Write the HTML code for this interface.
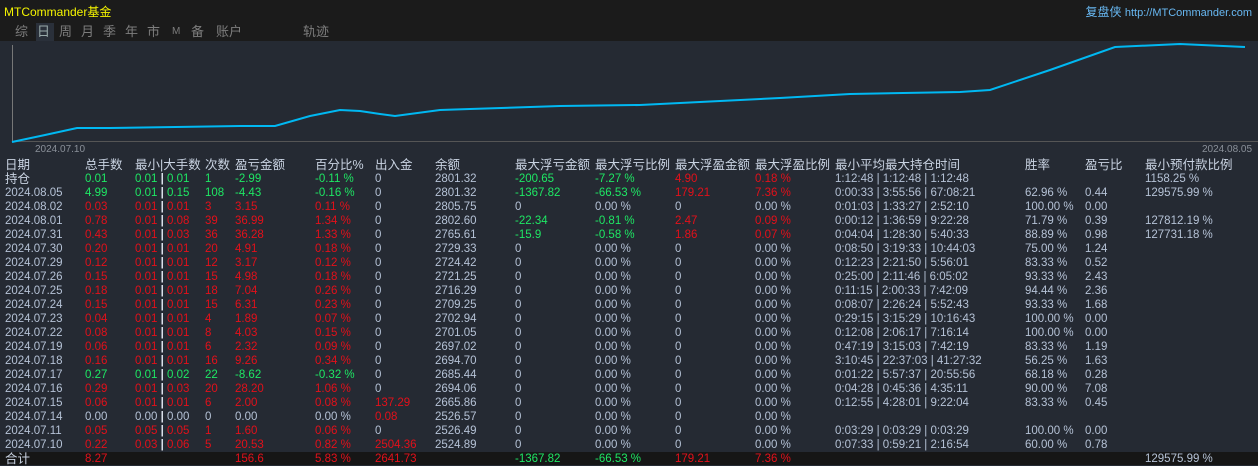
<!DOCTYPE html>
<html><head><meta charset="utf-8"><style>
body{margin:0;width:1258px;height:465px;background:#252a33;overflow:hidden;font-family:"Liberation Sans","Noto Sans CJK SC",sans-serif;position:relative}
.top{position:absolute;left:0;top:0;width:1258px;height:41px;background:#1b1b1b}
.t{position:absolute;white-space:nowrap}
.tab{position:absolute;top:23px;font-size:13px;color:#7d7d7d;height:18px;line-height:18px}
.r{position:absolute;left:0;width:1258px;height:14px;font-size:11.5px;line-height:14px;color:#b5c2d6}
.r span{position:absolute;white-space:nowrap}
.h{font-size:12.5px;color:#c9d3e2}
.g{color:#1ee864}.d{color:#e3101a}
.c1{left:5px}.c2{left:85px}.c3{left:135px}.c4{left:205px}.c5{left:235px}.c6{left:315px}.c7{left:375px}.c8{left:435px}.c9{left:515px}.c10{left:595px}.c11{left:675px}.c12{left:755px}.c13{left:835px}.c14{left:1025px}.c15{left:1085px}.c16{left:1145px}
.p{color:#e0e6f0}
</style></head><body>
<div class="top"></div>
<div class="t" style="left:4px;top:3px;font-size:12px;color:#f5f500">MTCommander基金</div>
<div class="t" style="right:6px;top:3px;font-size:12px;color:#68b8f2">复盘侠 <span style="font-size:11px">http://MTCommander.com</span></div>
<div style="position:absolute;left:36px;top:23px;width:18px;height:18px;background:#2a303a"></div>
<div class="tab" style="left:15px">综</div><div class="tab" style="left:37px;color:#9aa">日</div><div class="tab" style="left:59px">周</div><div class="tab" style="left:81px">月</div><div class="tab" style="left:103px">季</div><div class="tab" style="left:125px">年</div><div class="tab" style="left:147px">市</div><div class="tab" style="left:172px;font-size:10px">M</div><div class="tab" style="left:191px">备</div><div class="tab" style="left:216px">账户</div><div class="tab" style="left:303px">轨迹</div>
<svg style="position:absolute;left:0;top:0" width="1258" height="160">
<line x1="12.5" y1="45" x2="12.5" y2="142" stroke="#777" stroke-width="1"/>
<line x1="12" y1="141.5" x2="1258" y2="141.5" stroke="#555" stroke-width="1"/>
<polyline fill="none" stroke="#00b8f2" stroke-width="2" points="12,142 45,135 77,128 110,128 240,126 275,126 310,116 340,110 360,111 380,114 395,116 440,110 470,109 560,106 640,105 700,102 780,98 850,94 960,92 990,90 1050,70 1115,47 1180,44 1245,47"/>
<text x="35" y="152" font-size="10" fill="#8a9099" font-family="Liberation Sans">2024.07.10</text>
<text x="1202" y="152" font-size="10" fill="#8a9099" font-family="Liberation Sans">2024.08.05</text>
</svg>
<div class="r h" style="top:158px"><span class="c1">日期</span><span class="c2">总手数</span><span class="c3">最小|大手数</span><span class="c4">次数</span><span class="c5">盈亏金额</span><span class="c6">百分比%</span><span class="c7">出入金</span><span class="c8">余额</span><span class="c9">最大浮亏金额</span><span class="c10">最大浮亏比例</span><span class="c11">最大浮盈金额</span><span class="c12">最大浮盈比例</span><span class="c13">最小平均最大持仓时间</span><span class="c14">胜率</span><span class="c15">盈亏比</span><span class="c16">最小预付款比例</span></div>
<div class="r" style="top:172px"><span class="c1 h">持仓</span><span class="c2 g">0.01</span><span class="c3 g">0.01 <b class="p">|</b> 0.01</span><span class="c4 g">1</span><span class="c5 g">-2.99</span><span class="c6 g">-0.11 %</span><span class="c7">0</span><span class="c8">2801.32</span><span class="c9 g">-200.65</span><span class="c10 g">-7.27 %</span><span class="c11 d">4.90</span><span class="c12 d">0.18 %</span><span class="c13">1:12:48 | 1:12:48 | 1:12:48</span><span class="c16">1158.25 %</span></div>
<div class="r" style="top:186px"><span class="c1">2024.08.05</span><span class="c2 g">4.99</span><span class="c3 g">0.01 <b class="p">|</b> 0.15</span><span class="c4 g">108</span><span class="c5 g">-4.43</span><span class="c6 g">-0.16 %</span><span class="c7">0</span><span class="c8">2801.32</span><span class="c9 g">-1367.82</span><span class="c10 g">-66.53 %</span><span class="c11 d">179.21</span><span class="c12 d">7.36 %</span><span class="c13">0:00:33 | 3:55:56 | 67:08:21</span><span class="c14">62.96 %</span><span class="c15">0.44</span><span class="c16">129575.99 %</span></div>
<div class="r" style="top:200px"><span class="c1">2024.08.02</span><span class="c2 d">0.03</span><span class="c3 d">0.01 <b class="p">|</b> 0.01</span><span class="c4 d">3</span><span class="c5 d">3.15</span><span class="c6 d">0.11 %</span><span class="c7">0</span><span class="c8">2805.75</span><span class="c9">0</span><span class="c10">0.00 %</span><span class="c11">0</span><span class="c12">0.00 %</span><span class="c13">0:01:03 | 1:33:27 | 2:52:10</span><span class="c14">100.00 %</span><span class="c15">0.00</span></div>
<div class="r" style="top:214px"><span class="c1">2024.08.01</span><span class="c2 d">0.78</span><span class="c3 d">0.01 <b class="p">|</b> 0.08</span><span class="c4 d">39</span><span class="c5 d">36.99</span><span class="c6 d">1.34 %</span><span class="c7">0</span><span class="c8">2802.60</span><span class="c9 g">-22.34</span><span class="c10 g">-0.81 %</span><span class="c11 d">2.47</span><span class="c12 d">0.09 %</span><span class="c13">0:00:12 | 1:36:59 | 9:22:28</span><span class="c14">71.79 %</span><span class="c15">0.39</span><span class="c16">127812.19 %</span></div>
<div class="r" style="top:228px"><span class="c1">2024.07.31</span><span class="c2 d">0.43</span><span class="c3 d">0.01 <b class="p">|</b> 0.03</span><span class="c4 d">36</span><span class="c5 d">36.28</span><span class="c6 d">1.33 %</span><span class="c7">0</span><span class="c8">2765.61</span><span class="c9 g">-15.9</span><span class="c10 g">-0.58 %</span><span class="c11 d">1.86</span><span class="c12 d">0.07 %</span><span class="c13">0:04:04 | 1:28:30 | 5:40:33</span><span class="c14">88.89 %</span><span class="c15">0.98</span><span class="c16">127731.18 %</span></div>
<div class="r" style="top:242px"><span class="c1">2024.07.30</span><span class="c2 d">0.20</span><span class="c3 d">0.01 <b class="p">|</b> 0.01</span><span class="c4 d">20</span><span class="c5 d">4.91</span><span class="c6 d">0.18 %</span><span class="c7">0</span><span class="c8">2729.33</span><span class="c9">0</span><span class="c10">0.00 %</span><span class="c11">0</span><span class="c12">0.00 %</span><span class="c13">0:08:50 | 3:19:33 | 10:44:03</span><span class="c14">75.00 %</span><span class="c15">1.24</span></div>
<div class="r" style="top:256px"><span class="c1">2024.07.29</span><span class="c2 d">0.12</span><span class="c3 d">0.01 <b class="p">|</b> 0.01</span><span class="c4 d">12</span><span class="c5 d">3.17</span><span class="c6 d">0.12 %</span><span class="c7">0</span><span class="c8">2724.42</span><span class="c9">0</span><span class="c10">0.00 %</span><span class="c11">0</span><span class="c12">0.00 %</span><span class="c13">0:12:23 | 2:21:50 | 5:56:01</span><span class="c14">83.33 %</span><span class="c15">0.52</span></div>
<div class="r" style="top:270px"><span class="c1">2024.07.26</span><span class="c2 d">0.15</span><span class="c3 d">0.01 <b class="p">|</b> 0.01</span><span class="c4 d">15</span><span class="c5 d">4.98</span><span class="c6 d">0.18 %</span><span class="c7">0</span><span class="c8">2721.25</span><span class="c9">0</span><span class="c10">0.00 %</span><span class="c11">0</span><span class="c12">0.00 %</span><span class="c13">0:25:00 | 2:11:46 | 6:05:02</span><span class="c14">93.33 %</span><span class="c15">2.43</span></div>
<div class="r" style="top:284px"><span class="c1">2024.07.25</span><span class="c2 d">0.18</span><span class="c3 d">0.01 <b class="p">|</b> 0.01</span><span class="c4 d">18</span><span class="c5 d">7.04</span><span class="c6 d">0.26 %</span><span class="c7">0</span><span class="c8">2716.29</span><span class="c9">0</span><span class="c10">0.00 %</span><span class="c11">0</span><span class="c12">0.00 %</span><span class="c13">0:11:15 | 2:00:33 | 7:42:09</span><span class="c14">94.44 %</span><span class="c15">2.36</span></div>
<div class="r" style="top:298px"><span class="c1">2024.07.24</span><span class="c2 d">0.15</span><span class="c3 d">0.01 <b class="p">|</b> 0.01</span><span class="c4 d">15</span><span class="c5 d">6.31</span><span class="c6 d">0.23 %</span><span class="c7">0</span><span class="c8">2709.25</span><span class="c9">0</span><span class="c10">0.00 %</span><span class="c11">0</span><span class="c12">0.00 %</span><span class="c13">0:08:07 | 2:26:24 | 5:52:43</span><span class="c14">93.33 %</span><span class="c15">1.68</span></div>
<div class="r" style="top:312px"><span class="c1">2024.07.23</span><span class="c2 d">0.04</span><span class="c3 d">0.01 <b class="p">|</b> 0.01</span><span class="c4 d">4</span><span class="c5 d">1.89</span><span class="c6 d">0.07 %</span><span class="c7">0</span><span class="c8">2702.94</span><span class="c9">0</span><span class="c10">0.00 %</span><span class="c11">0</span><span class="c12">0.00 %</span><span class="c13">0:29:15 | 3:15:29 | 10:16:43</span><span class="c14">100.00 %</span><span class="c15">0.00</span></div>
<div class="r" style="top:326px"><span class="c1">2024.07.22</span><span class="c2 d">0.08</span><span class="c3 d">0.01 <b class="p">|</b> 0.01</span><span class="c4 d">8</span><span class="c5 d">4.03</span><span class="c6 d">0.15 %</span><span class="c7">0</span><span class="c8">2701.05</span><span class="c9">0</span><span class="c10">0.00 %</span><span class="c11">0</span><span class="c12">0.00 %</span><span class="c13">0:12:08 | 2:06:17 | 7:16:14</span><span class="c14">100.00 %</span><span class="c15">0.00</span></div>
<div class="r" style="top:340px"><span class="c1">2024.07.19</span><span class="c2 d">0.06</span><span class="c3 d">0.01 <b class="p">|</b> 0.01</span><span class="c4 d">6</span><span class="c5 d">2.32</span><span class="c6 d">0.09 %</span><span class="c7">0</span><span class="c8">2697.02</span><span class="c9">0</span><span class="c10">0.00 %</span><span class="c11">0</span><span class="c12">0.00 %</span><span class="c13">0:47:19 | 3:15:03 | 7:42:19</span><span class="c14">83.33 %</span><span class="c15">1.19</span></div>
<div class="r" style="top:354px"><span class="c1">2024.07.18</span><span class="c2 d">0.16</span><span class="c3 d">0.01 <b class="p">|</b> 0.01</span><span class="c4 d">16</span><span class="c5 d">9.26</span><span class="c6 d">0.34 %</span><span class="c7">0</span><span class="c8">2694.70</span><span class="c9">0</span><span class="c10">0.00 %</span><span class="c11">0</span><span class="c12">0.00 %</span><span class="c13">3:10:45 | 22:37:03 | 41:27:32</span><span class="c14">56.25 %</span><span class="c15">1.63</span></div>
<div class="r" style="top:368px"><span class="c1">2024.07.17</span><span class="c2 g">0.27</span><span class="c3 g">0.01 <b class="p">|</b> 0.02</span><span class="c4 g">22</span><span class="c5 g">-8.62</span><span class="c6 g">-0.32 %</span><span class="c7">0</span><span class="c8">2685.44</span><span class="c9">0</span><span class="c10">0.00 %</span><span class="c11">0</span><span class="c12">0.00 %</span><span class="c13">0:01:22 | 5:57:37 | 20:55:56</span><span class="c14">68.18 %</span><span class="c15">0.28</span></div>
<div class="r" style="top:382px"><span class="c1">2024.07.16</span><span class="c2 d">0.29</span><span class="c3 d">0.01 <b class="p">|</b> 0.03</span><span class="c4 d">20</span><span class="c5 d">28.20</span><span class="c6 d">1.06 %</span><span class="c7">0</span><span class="c8">2694.06</span><span class="c9">0</span><span class="c10">0.00 %</span><span class="c11">0</span><span class="c12">0.00 %</span><span class="c13">0:04:28 | 0:45:36 | 4:35:11</span><span class="c14">90.00 %</span><span class="c15">7.08</span></div>
<div class="r" style="top:396px"><span class="c1">2024.07.15</span><span class="c2 d">0.06</span><span class="c3 d">0.01 <b class="p">|</b> 0.01</span><span class="c4 d">6</span><span class="c5 d">2.00</span><span class="c6 d">0.08 %</span><span class="c7 d">137.29</span><span class="c8">2665.86</span><span class="c9">0</span><span class="c10">0.00 %</span><span class="c11">0</span><span class="c12">0.00 %</span><span class="c13">0:12:55 | 4:28:01 | 9:22:04</span><span class="c14">83.33 %</span><span class="c15">0.45</span></div>
<div class="r" style="top:410px"><span class="c1">2024.07.14</span><span class="c2">0.00</span><span class="c3">0.00 <b class="p">|</b> 0.00</span><span class="c4">0</span><span class="c5">0.00</span><span class="c6">0.00 %</span><span class="c7 d">0.08</span><span class="c8">2526.57</span><span class="c9">0</span><span class="c10">0.00 %</span><span class="c11">0</span><span class="c12">0.00 %</span></div>
<div class="r" style="top:424px"><span class="c1">2024.07.11</span><span class="c2 d">0.05</span><span class="c3 d">0.05 <b class="p">|</b> 0.05</span><span class="c4 d">1</span><span class="c5 d">1.60</span><span class="c6 d">0.06 %</span><span class="c7">0</span><span class="c8">2526.49</span><span class="c9">0</span><span class="c10">0.00 %</span><span class="c11">0</span><span class="c12">0.00 %</span><span class="c13">0:03:29 | 0:03:29 | 0:03:29</span><span class="c14">100.00 %</span><span class="c15">0.00</span></div>
<div class="r" style="top:438px"><span class="c1">2024.07.10</span><span class="c2 d">0.22</span><span class="c3 d">0.03 <b class="p">|</b> 0.06</span><span class="c4 d">5</span><span class="c5 d">20.53</span><span class="c6 d">0.82 %</span><span class="c7 d">2504.36</span><span class="c8">2524.89</span><span class="c9">0</span><span class="c10">0.00 %</span><span class="c11">0</span><span class="c12">0.00 %</span><span class="c13">0:07:33 | 0:59:21 | 2:16:54</span><span class="c14">60.00 %</span><span class="c15">0.78</span></div>
<div style="position:absolute;left:0;top:452px;width:1258px;height:13px;background:#161616"></div>
<div class="r" style="top:452px"><span class="c1 h">合计</span><span class="c2 d">8.27</span><span class="c5 d">156.6</span><span class="c6 d">5.83 %</span><span class="c7 d">2641.73</span><span class="c9 g">-1367.82</span><span class="c10 g">-66.53 %</span><span class="c11 d">179.21</span><span class="c12 d">7.36 %</span><span class="c16">129575.99 %</span></div>
</body></html>
